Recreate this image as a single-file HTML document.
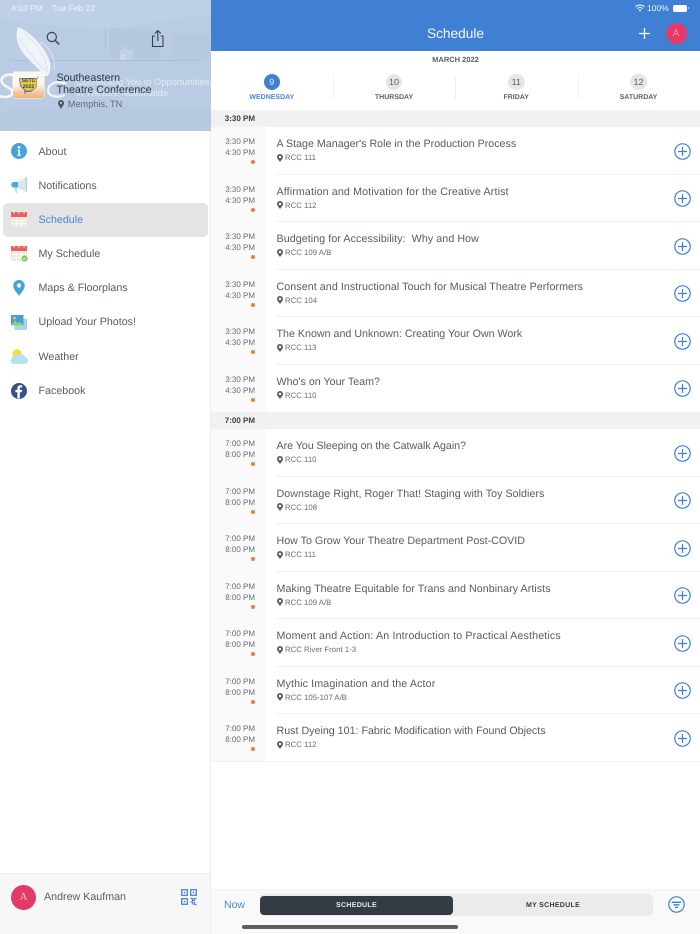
<!DOCTYPE html>
<html><head><meta charset="utf-8">
<style>
html,body{margin:0;padding:0;width:700px;height:934px;overflow:hidden;background:#fff;font-family:"Liberation Sans",sans-serif;color:#4f5660;text-rendering:geometricPrecision}
.a{position:absolute;white-space:nowrap}
svg{position:absolute;overflow:visible}
.m{left:38.5px;font-size:10.7px;line-height:14px;color:#555c65}
.sec{position:absolute;left:211px;width:489px;height:17px;background:#f1f1f1;font-size:8px;font-weight:bold;line-height:17px;color:#3a4149}
.sec span{position:absolute;left:0;width:44px;text-align:right}
.row{position:absolute;left:211px;width:489px;height:47.5px}
.row .tc{position:absolute;left:0;top:0;width:55px;height:47.5px;background:#fafafa}
.row .t1,.row .t2{position:absolute;left:0;width:44px;text-align:right;font-size:8px;line-height:10px;color:#656b73}
.row .t1{top:10px}.row .t2{top:21px}
.row .d{position:absolute;left:40px;top:33px;width:4px;height:4px;border-radius:50%;background:#ed7d31}
.row .ti{position:absolute;left:65.5px;top:10px;font-size:10.7px;line-height:14px;color:#555c65;white-space:nowrap}
.row .rm{position:absolute;left:74px;top:25.2px;font-size:7.8px;line-height:11px;color:#666c74;white-space:nowrap}
.row .ln{position:absolute;left:65px;right:0;bottom:0;height:1px;background:#f2f2f2}
.row svg.p{left:66px;top:26.5px}
.row svg.c{left:462.5px;top:15.5px}
.day{position:absolute;top:93.500px;font-size:7px;line-height:8px;font-weight:bold;color:#5a6068;text-align:center;width:80px}
.dc{position:absolute;top:73.5px;width:16.5px;height:16.5px;border-radius:50%;background:#e6e6e6;color:#5a6068;font-size:9px;line-height:16.5px;text-align:center}
</style></head><body>

<svg width="0" height="0" style="position:absolute"><defs>
<symbol id="pin" viewBox="0 0 6 8"><path fill-rule="evenodd" d="M3 0A3 3 0 0 1 6 3C6 4.800 4 6.300 3 8 2 6.300 0 4.800 0 3A3 3 0 0 1 3 0zM3 1.800a1.200 1.200 0 1 0 0 2.400 1.200 1.200 0 0 0 0-2.400z" fill="#555c65"/></symbol>
<symbol id="add" viewBox="0 0 17 17"><circle cx="8.500" cy="8.500" r="7.700" fill="none" stroke="#3f80d4" stroke-width="1.200"/><path d="M8.500 4V13M4 8.500H13" stroke="#3f80d4" stroke-width="1.200"/></symbol>
</defs></svg>

<!-- Sidebar header -->
<div class="a" style="left:0;top:0;width:211px;height:131px;background:#b9cce3;overflow:hidden">
  <svg style="left:0;top:0" width="211" height="131" viewBox="0 0 211 131">
    <path d="M0 0H211V14L100 30L0 20Z" fill="#bed0e7"/>
    <path d="M110 28L160 32V58L110 58Z" fill="#b3c7df"/>
    <path d="M172 34H211V60H172Z" fill="#b5c9e1"/>
    <path d="M0 25H30V58H0Z" fill="#bccee5"/>
    <path d="M0 112C60 104 150 104 211 112V131H0Z" fill="#b6c9e0"/>
    <path d="M120 50l5-4 4 5 4-3v12h-13z" fill="#c1d2e6"/>
    <rect x="120" y="54" width="6" height="6" fill="#cddaeb" opacity=".7"/>
    <path d="M11 60.500H200" stroke="#aabbd0" stroke-width=".7"/>
    <!-- wing -->
    <path d="M18 27C30 32 45 46 50 62C51 68 50 72 48 76H44C38 66 24 58 19 46C16 40 16 33 18 27Z" fill="#f4f7fb" opacity=".92"/>
    <path d="M24 33C36 42 46 54 47 72M19 38C26 50 36 60 44 70" fill="none" stroke="#d0ddec" stroke-width=".7"/>
    <path d="M40 42C50 48 56 58 54 70" fill="none" stroke="#e3ebf5" stroke-width=".8"/>
    <!-- S and C letters -->
    <path d="M14 75C4 73-1 79 3 84C7 88 14 89 12 94C10 98 3 97-1 96" fill="none" stroke="#f3f6fb" stroke-width="2.600"/>
    <path d="M66 84C58 80 49 83 48 90C48 97 58 98 65 95" fill="none" stroke="#f3f6fb" stroke-width="2.200"/>
    <!-- search -->
    <circle cx="51.800" cy="37" r="4.600" fill="none" stroke="#39424c" stroke-width="1.200"/>
    <path d="M55.200 40.500L59.300 44.500" stroke="#39424c" stroke-width="1.400"/>
    <path d="M105.500 27V49" stroke="#a5b7cd" stroke-width=".7"/>
    <!-- share -->
    <path d="M155 36h-2.500v10.500h10.500V36h-2.500M157.800 41V31M154.800 33.500l3-3 3 3" fill="none" stroke="#39424c" stroke-width="1.100"/>
  </svg>
  <div class="a" style="left:76px;top:76px;font-size:9.300px;line-height:12px;color:#e4ecf5">Connecting You to Opportunities</div>
  <div class="a" style="left:76px;top:88px;font-size:9.500px;line-height:12px;color:#e4ecf5">in Theatre Nationwide</div>
  <div class="a" style="left:13px;top:72px;width:31px;height:26px;border-radius:2px;background:linear-gradient(#faf8ee 0,#fdf6ea 50%,#f6c89a 78%,#f3b07a 100%);box-shadow:0 0 0 .6px rgba(255,255,255,.8)"></div>
  <svg style="left:18px;top:74px" width="22" height="22" viewBox="0 0 22 22"><path d="M1 4H19L21 1L19 6V13L13 18H8L7 21L6 16L2 12Z" fill="#5d7fb8"/><path d="M2 4.500H18.500V13L13 16.500H8L3 11.500Z" fill="#f0c92c"/></svg>
  <div class="a" style="left:18px;top:79px;width:21px;color:#2b4a8c;font-size:5.200px;line-height:5.500px;font-weight:bold;text-align:center">SETC<br>2022</div>
  <div class="a" style="left:56.500px;top:71.500px;font-size:10.700px;line-height:12px;color:#2f3740">Southeastern</div>
  <div class="a" style="left:56.500px;top:83.500px;font-size:10.700px;line-height:12px;color:#2f3740">Theatre Conference</div>
  <svg style="left:57.500px;top:99.500px" width="6" height="9" viewBox="0 0 6 9"><path fill-rule="evenodd" d="M3 0a3 3 0 0 1 3 3c0 2-2 4-3 6-1-2-3-4-3-6a3 3 0 0 1 3-3zM3 1.900a1.100 1.100 0 1 0 0 2.200 1.100 1.100 0 0 0 0-2.200z" fill="#4d5761"/></svg>
  <div class="a" style="left:67.800px;top:98px;font-size:9.200px;line-height:12px;color:#5f6a77">Memphis, TN</div>
  <div class="a" style="left:11px;top:3px;font-size:8.500px;line-height:10px;color:#eef3f9">4:03 PM</div>
  <div class="a" style="left:52px;top:3px;font-size:8.500px;line-height:10px;color:#eef3f9">Tue Feb 22</div>
</div>

<!-- Sidebar -->
<div class="a" style="left:210px;top:131px;width:1px;height:803px;background:#ececec"></div>
<div class="a" style="left:3px;top:202.500px;width:205px;height:34px;border-radius:5px;background:#e4e4e4"></div>

<svg style="left:11px;top:143px" width="16" height="16" viewBox="0 0 16 16"><circle cx="8" cy="8" r="8" fill="#47a2db"/><circle cx="8" cy="4.300" r="1.300" fill="#fff"/><path d="M6.500 6.700h2.400v5h1v1H6.300v-1h1V7.700h-.8z" fill="#fff"/></svg>
<div class="a m" style="top:144.500px">About</div>

<svg style="left:11px;top:177px" width="17" height="17" viewBox="0 0 17 17"><path d="M7 4L15 .5V14.500L7 11z" fill="#dfe4e8"/><rect x="14.500" y="0" width="1.500" height="15" fill="#a8d8ee"/><path d="M2.500 5H7V10.500H2.500A2.800 2.800 0 0 1 2.500 5z" fill="#3fb0dc"/><path d="M3.500 10.500h2.200l.8 5.500H4.500z" fill="#b5dcee"/></svg>
<div class="a m" style="top:178.500px">Notifications</div>

<svg style="left:11px;top:212px" width="16" height="15" viewBox="0 0 16 15"><rect width="16" height="15" fill="#efe9d9"/><rect width="16" height="5" fill="#e8605f"/><path d="M3 0v1.500M8 0v1.500M13 0v1.500" stroke="#fff" stroke-width="1"/><path d="M5.300 5v10M10.700 5v10M0 8.500h16M0 11.800h16" stroke="#fff" stroke-width=".8"/></svg>
<div class="a m" style="top:212.500px;color:#4a86cf">Schedule</div>

<svg style="left:11px;top:246px" width="17" height="16" viewBox="0 0 17 16"><rect width="16" height="15" fill="#efe9d9"/><rect width="16" height="5" fill="#e8605f"/><path d="M3 0v1.500M8 0v1.500M13 0v1.500" stroke="#fff" stroke-width="1"/><path d="M5.300 5v10M10.700 5v10M0 8.500h16M0 11.800h16" stroke="#fff" stroke-width=".8"/><circle cx="13.500" cy="12.500" r="3" fill="#7cc354"/><path d="M12 12.500l1 1 2-2" stroke="#fff" stroke-width=".8" fill="none"/></svg>
<div class="a m" style="top:247px">My Schedule</div>

<svg style="left:13px;top:279.500px" width="12" height="17" viewBox="0 0 12 17"><path d="M6 0a5.800 5.800 0 0 1 5.800 5.800C11.800 9.500 8 12.800 6 16 4 12.800.2 9.500.2 5.800A5.800 5.800 0 0 1 6 0z" fill="#47a2db"/><circle cx="6" cy="5.500" r="2.100" fill="#fff"/></svg>
<div class="a m" style="top:281px">Maps &amp; Floorplans</div>

<svg style="left:11px;top:315px" width="16" height="15" viewBox="0 0 16 15"><rect x="3.500" y="4" width="12.500" height="11" fill="#a6d4ee"/><rect width="12.500" height="10.500" fill="#3fa0dd"/><path d="M0 10.500l4-5 3 3 2-2 3.500 4z" fill="#9ccb6b"/><circle cx="3.500" cy="3" r="1.300" fill="#f4dc46"/></svg>
<div class="a m" style="top:315px">Upload Your Photos!</div>

<svg style="left:11px;top:349px" width="17" height="15" viewBox="0 0 17 15"><circle cx="6" cy="4.500" r="4.500" fill="#f5e02e"/><path d="M3 15A3 3 0 0 1 .5 10 4.500 4.500 0 0 1 5 6 5.500 5.500 0 0 1 13.500 7.500 3.800 3.800 0 0 1 14 15z" fill="#b7dff2"/></svg>
<div class="a m" style="top:349.500px">Weather</div>

<svg style="left:11px;top:382.500px" width="16" height="16" viewBox="0 0 16 16"><circle cx="8" cy="8" r="8" fill="#35508f"/><path d="M8.800 15.500V9.300h2l.3-2.400H8.800V5.500c0-.7.2-1.100 1.200-1.100h1.200V2.300c-.3 0-1-.1-1.800-.1-1.800 0-3 1.100-3 3.100v1.600h-2v2.400h2v6.200z" fill="#fff"/></svg>
<div class="a m" style="top:383.500px">Facebook</div>

<!-- Sidebar footer -->
<div class="a" style="left:0;top:873px;width:210px;height:61px;background:#f7f7f7;border-top:1px solid #ececec;box-sizing:border-box"></div>
<div class="a" style="left:11px;top:884.500px;width:25px;height:25px;border-radius:50%;background:#e33b66;color:#f7c9d6;font:11px/25px 'Liberation Serif',serif;text-align:center">A</div>
<div class="a" style="left:44px;top:890px;font-size:10.700px;line-height:14px;color:#555c65">Andrew Kaufman</div>
<svg style="left:181px;top:889px" width="16" height="16" viewBox="0 0 16 16" fill="none" stroke="#4a86cf" stroke-width="1.300"><rect x=".7" y=".7" width="5.600" height="5.600"/><rect x="9.700" y=".7" width="5.600" height="5.600"/><rect x=".7" y="9.700" width="5.600" height="5.600"/><rect x="2.700" y="2.700" width="1.600" height="1.600" fill="#4a86cf" stroke="none"/><rect x="11.700" y="2.700" width="1.600" height="1.600" fill="#4a86cf" stroke="none"/><rect x="2.700" y="11.700" width="1.600" height="1.600" fill="#4a86cf" stroke="none"/><path d="M9.500 9.500h2v2h2v-2h2M9.500 13h2v2.500M13.500 13v2.500h2"/></svg>

<!-- Top bar -->
<div class="a" style="left:211px;top:0;width:489px;height:50.500px;background:#3f80d4"></div>
<div class="a" style="left:211px;width:489px;top:25px;text-align:center;font-size:13.700px;line-height:17px;color:#f4f8fd">Schedule</div>
<div class="a" style="left:647px;top:3px;font-size:8.500px;line-height:10px;color:#eef4fb">100%</div>
<svg style="left:635px;top:4px" width="10" height="8" viewBox="0 0 10 8"><path d="M5 7.500L3.600 6a2 2 0 0 1 2.800 0zM2.600 5A3.500 3.500 0 0 1 7.400 5l.8-.8A4.700 4.700 0 0 0 1.800 4.200zM.9 3.300a6 6 0 0 1 8.200 0l.8-.8A7.100 7.100 0 0 0 .1 2.500z" fill="#eef4fb"/></svg>
<div class="a" style="left:672.500px;top:4.500px;width:14px;height:7px;border-radius:2px;background:#fff"></div>
<div class="a" style="left:688px;top:7px;width:1px;height:2px;background:#b6d0ee"></div>
<svg style="left:639px;top:28px" width="11" height="11" viewBox="0 0 11 11"><path d="M5.500 0V11M0 5.500H11" stroke="#fff" stroke-width="1.300"/></svg>
<div class="a" style="left:665.500px;top:23px;width:21px;height:21px;border-radius:50%;background:#e33b66;color:#f39bb4;font:9.500px/21px 'Liberation Sans',sans-serif;text-align:center">A</div>

<!-- Date strip -->
<div class="a" style="left:211px;width:489px;top:54.500px;text-align:center;font-size:7.500px;line-height:9px;font-weight:bold;color:#5a6068">MARCH 2022</div>
<div class="dc" style="left:263.500px;background:#3f80d4;color:#e6eefa">9</div>
<div class="day" style="left:231.800px;color:#4a86cf">WEDNESDAY</div>
<div class="dc" style="left:385.800px">10</div>
<div class="day" style="left:354px">THURSDAY</div>
<div class="dc" style="left:508px">11</div>
<div class="day" style="left:476.200px">FRIDAY</div>
<div class="dc" style="left:630.300px">12</div>
<div class="day" style="left:598.500px">SATURDAY</div>
<div class="a" style="left:332.500px;top:76px;width:1px;height:23px;background:#f0f0f0"></div>
<div class="a" style="left:455px;top:76px;width:1px;height:23px;background:#f0f0f0"></div>
<div class="a" style="left:577.500px;top:76px;width:1px;height:23px;background:#f0f0f0"></div>

<!-- Section 1 -->
<div class="sec" style="top:110px"><span>3:30 PM</span></div>

<div class="row" style="top:127px"><div class="tc"></div><div class="t1">3:30 PM</div><div class="t2">4:30 PM</div><div class="d"></div><div class="ti">A Stage Manager's Role in the Production Process</div><svg class="p" width="6" height="8"><use href="#pin"/></svg><div class="rm">RCC 111</div><svg class="c" width="17" height="17"><use href="#add"/></svg><div class="ln"></div></div>

<div class="row" style="top:174.500px"><div class="tc"></div><div class="t1">3:30 PM</div><div class="t2">4:30 PM</div><div class="d"></div><div class="ti" style="letter-spacing:.12px">Affirmation and Motivation for the Creative Artist</div><svg class="p" width="6" height="8"><use href="#pin"/></svg><div class="rm">RCC 112</div><svg class="c" width="17" height="17"><use href="#add"/></svg><div class="ln"></div></div>

<div class="row" style="top:222px"><div class="tc"></div><div class="t1">3:30 PM</div><div class="t2">4:30 PM</div><div class="d"></div><div class="ti" style="letter-spacing:.07px">Budgeting for Accessibility:&nbsp; Why and How</div><svg class="p" width="6" height="8"><use href="#pin"/></svg><div class="rm">RCC 109 A/B</div><svg class="c" width="17" height="17"><use href="#add"/></svg><div class="ln"></div></div>

<div class="row" style="top:269.500px"><div class="tc"></div><div class="t1">3:30 PM</div><div class="t2">4:30 PM</div><div class="d"></div><div class="ti" style="letter-spacing:.065px">Consent and Instructional Touch for Musical Theatre Performers</div><svg class="p" width="6" height="8"><use href="#pin"/></svg><div class="rm">RCC 104</div><svg class="c" width="17" height="17"><use href="#add"/></svg><div class="ln"></div></div>

<div class="row" style="top:317px"><div class="tc"></div><div class="t1">3:30 PM</div><div class="t2">4:30 PM</div><div class="d"></div><div class="ti">The Known and Unknown: Creating Your Own Work</div><svg class="p" width="6" height="8"><use href="#pin"/></svg><div class="rm">RCC 113</div><svg class="c" width="17" height="17"><use href="#add"/></svg><div class="ln"></div></div>

<div class="row" style="top:364.500px"><div class="tc"></div><div class="t1">3:30 PM</div><div class="t2">4:30 PM</div><div class="d"></div><div class="ti">Who's on Your Team?</div><svg class="p" width="6" height="8"><use href="#pin"/></svg><div class="rm">RCC 110</div><svg class="c" width="17" height="17"><use href="#add"/></svg></div>

<!-- Section 2 -->
<div class="sec" style="top:412px"><span>7:00 PM</span></div>

<div class="row" style="top:429px"><div class="tc"></div><div class="t1">7:00 PM</div><div class="t2">8:00 PM</div><div class="d"></div><div class="ti" style="letter-spacing:-.05px">Are You Sleeping on the Catwalk Again?</div><svg class="p" width="6" height="8"><use href="#pin"/></svg><div class="rm">RCC 110</div><svg class="c" width="17" height="17"><use href="#add"/></svg><div class="ln"></div></div>

<div class="row" style="top:476.500px"><div class="tc"></div><div class="t1">7:00 PM</div><div class="t2">8:00 PM</div><div class="d"></div><div class="ti" style="letter-spacing:.04px">Downstage Right, Roger That! Staging with Toy Soldiers</div><svg class="p" width="6" height="8"><use href="#pin"/></svg><div class="rm">RCC 108</div><svg class="c" width="17" height="17"><use href="#add"/></svg><div class="ln"></div></div>

<div class="row" style="top:524px"><div class="tc"></div><div class="t1">7:00 PM</div><div class="t2">8:00 PM</div><div class="d"></div><div class="ti">How To Grow Your Theatre Department Post-COVID</div><svg class="p" width="6" height="8"><use href="#pin"/></svg><div class="rm">RCC 111</div><svg class="c" width="17" height="17"><use href="#add"/></svg><div class="ln"></div></div>

<div class="row" style="top:571.500px"><div class="tc"></div><div class="t1">7:00 PM</div><div class="t2">8:00 PM</div><div class="d"></div><div class="ti" style="letter-spacing:.05px">Making Theatre Equitable for Trans and Nonbinary Artists</div><svg class="p" width="6" height="8"><use href="#pin"/></svg><div class="rm">RCC 109 A/B</div><svg class="c" width="17" height="17"><use href="#add"/></svg><div class="ln"></div></div>

<div class="row" style="top:619px"><div class="tc"></div><div class="t1">7:00 PM</div><div class="t2">8:00 PM</div><div class="d"></div><div class="ti" style="letter-spacing:.14px">Moment and Action: An Introduction to Practical Aesthetics</div><svg class="p" width="6" height="8"><use href="#pin"/></svg><div class="rm">RCC River Front 1-3</div><svg class="c" width="17" height="17"><use href="#add"/></svg><div class="ln"></div></div>

<div class="row" style="top:666.500px"><div class="tc"></div><div class="t1">7:00 PM</div><div class="t2">8:00 PM</div><div class="d"></div><div class="ti" style="letter-spacing:.12px">Mythic Imagination and the Actor</div><svg class="p" width="6" height="8"><use href="#pin"/></svg><div class="rm">RCC 105-107 A/B</div><svg class="c" width="17" height="17"><use href="#add"/></svg><div class="ln"></div></div>

<div class="row" style="top:714px"><div class="tc"></div><div class="t1">7:00 PM</div><div class="t2">8:00 PM</div><div class="d"></div><div class="ti">Rust Dyeing 101: Fabric Modification with Found Objects</div><svg class="p" width="6" height="8"><use href="#pin"/></svg><div class="rm">RCC 112</div><svg class="c" width="17" height="17"><use href="#add"/></svg><div class="ln" style="left:0"></div></div>

<!-- Bottom bar -->
<div class="a" style="left:211px;top:889px;width:489px;height:45px;background:#f9f9f9;border-top:1px solid #f3f3f3;box-sizing:border-box"></div>
<div class="a" style="left:224px;top:898px;font-size:10.500px;line-height:14px;color:#4a86cf">Now</div>
<div class="a" style="left:259.500px;top:894px;width:393px;height:22px;border-radius:5px;background:#ebebeb"></div>
<div class="a" style="left:260px;top:895.500px;width:193px;height:19px;border-radius:4px;background:#333b45;color:#e9ebee;font-size:7px;line-height:19px;font-weight:bold;text-align:center;letter-spacing:.3px">SCHEDULE</div>
<div class="a" style="left:453px;top:895.500px;width:200px;height:19px;color:#33393f;font-size:7px;line-height:19px;font-weight:bold;text-align:center;letter-spacing:.3px">MY SCHEDULE</div>
<svg style="left:667.500px;top:896px" width="17" height="17" viewBox="0 0 17 17"><circle cx="8.500" cy="8.500" r="7.700" fill="none" stroke="#3f80d4" stroke-width="1.200"/><path d="M3.700 6.300H13.300M5.500 8.800H11.500M7 11.300H10" stroke="#3f80d4" stroke-width="1.300"/></svg>
<div class="a" style="left:242px;top:925px;width:216px;height:3.500px;border-radius:2px;background:#5f5f5f"></div>

</body></html>
